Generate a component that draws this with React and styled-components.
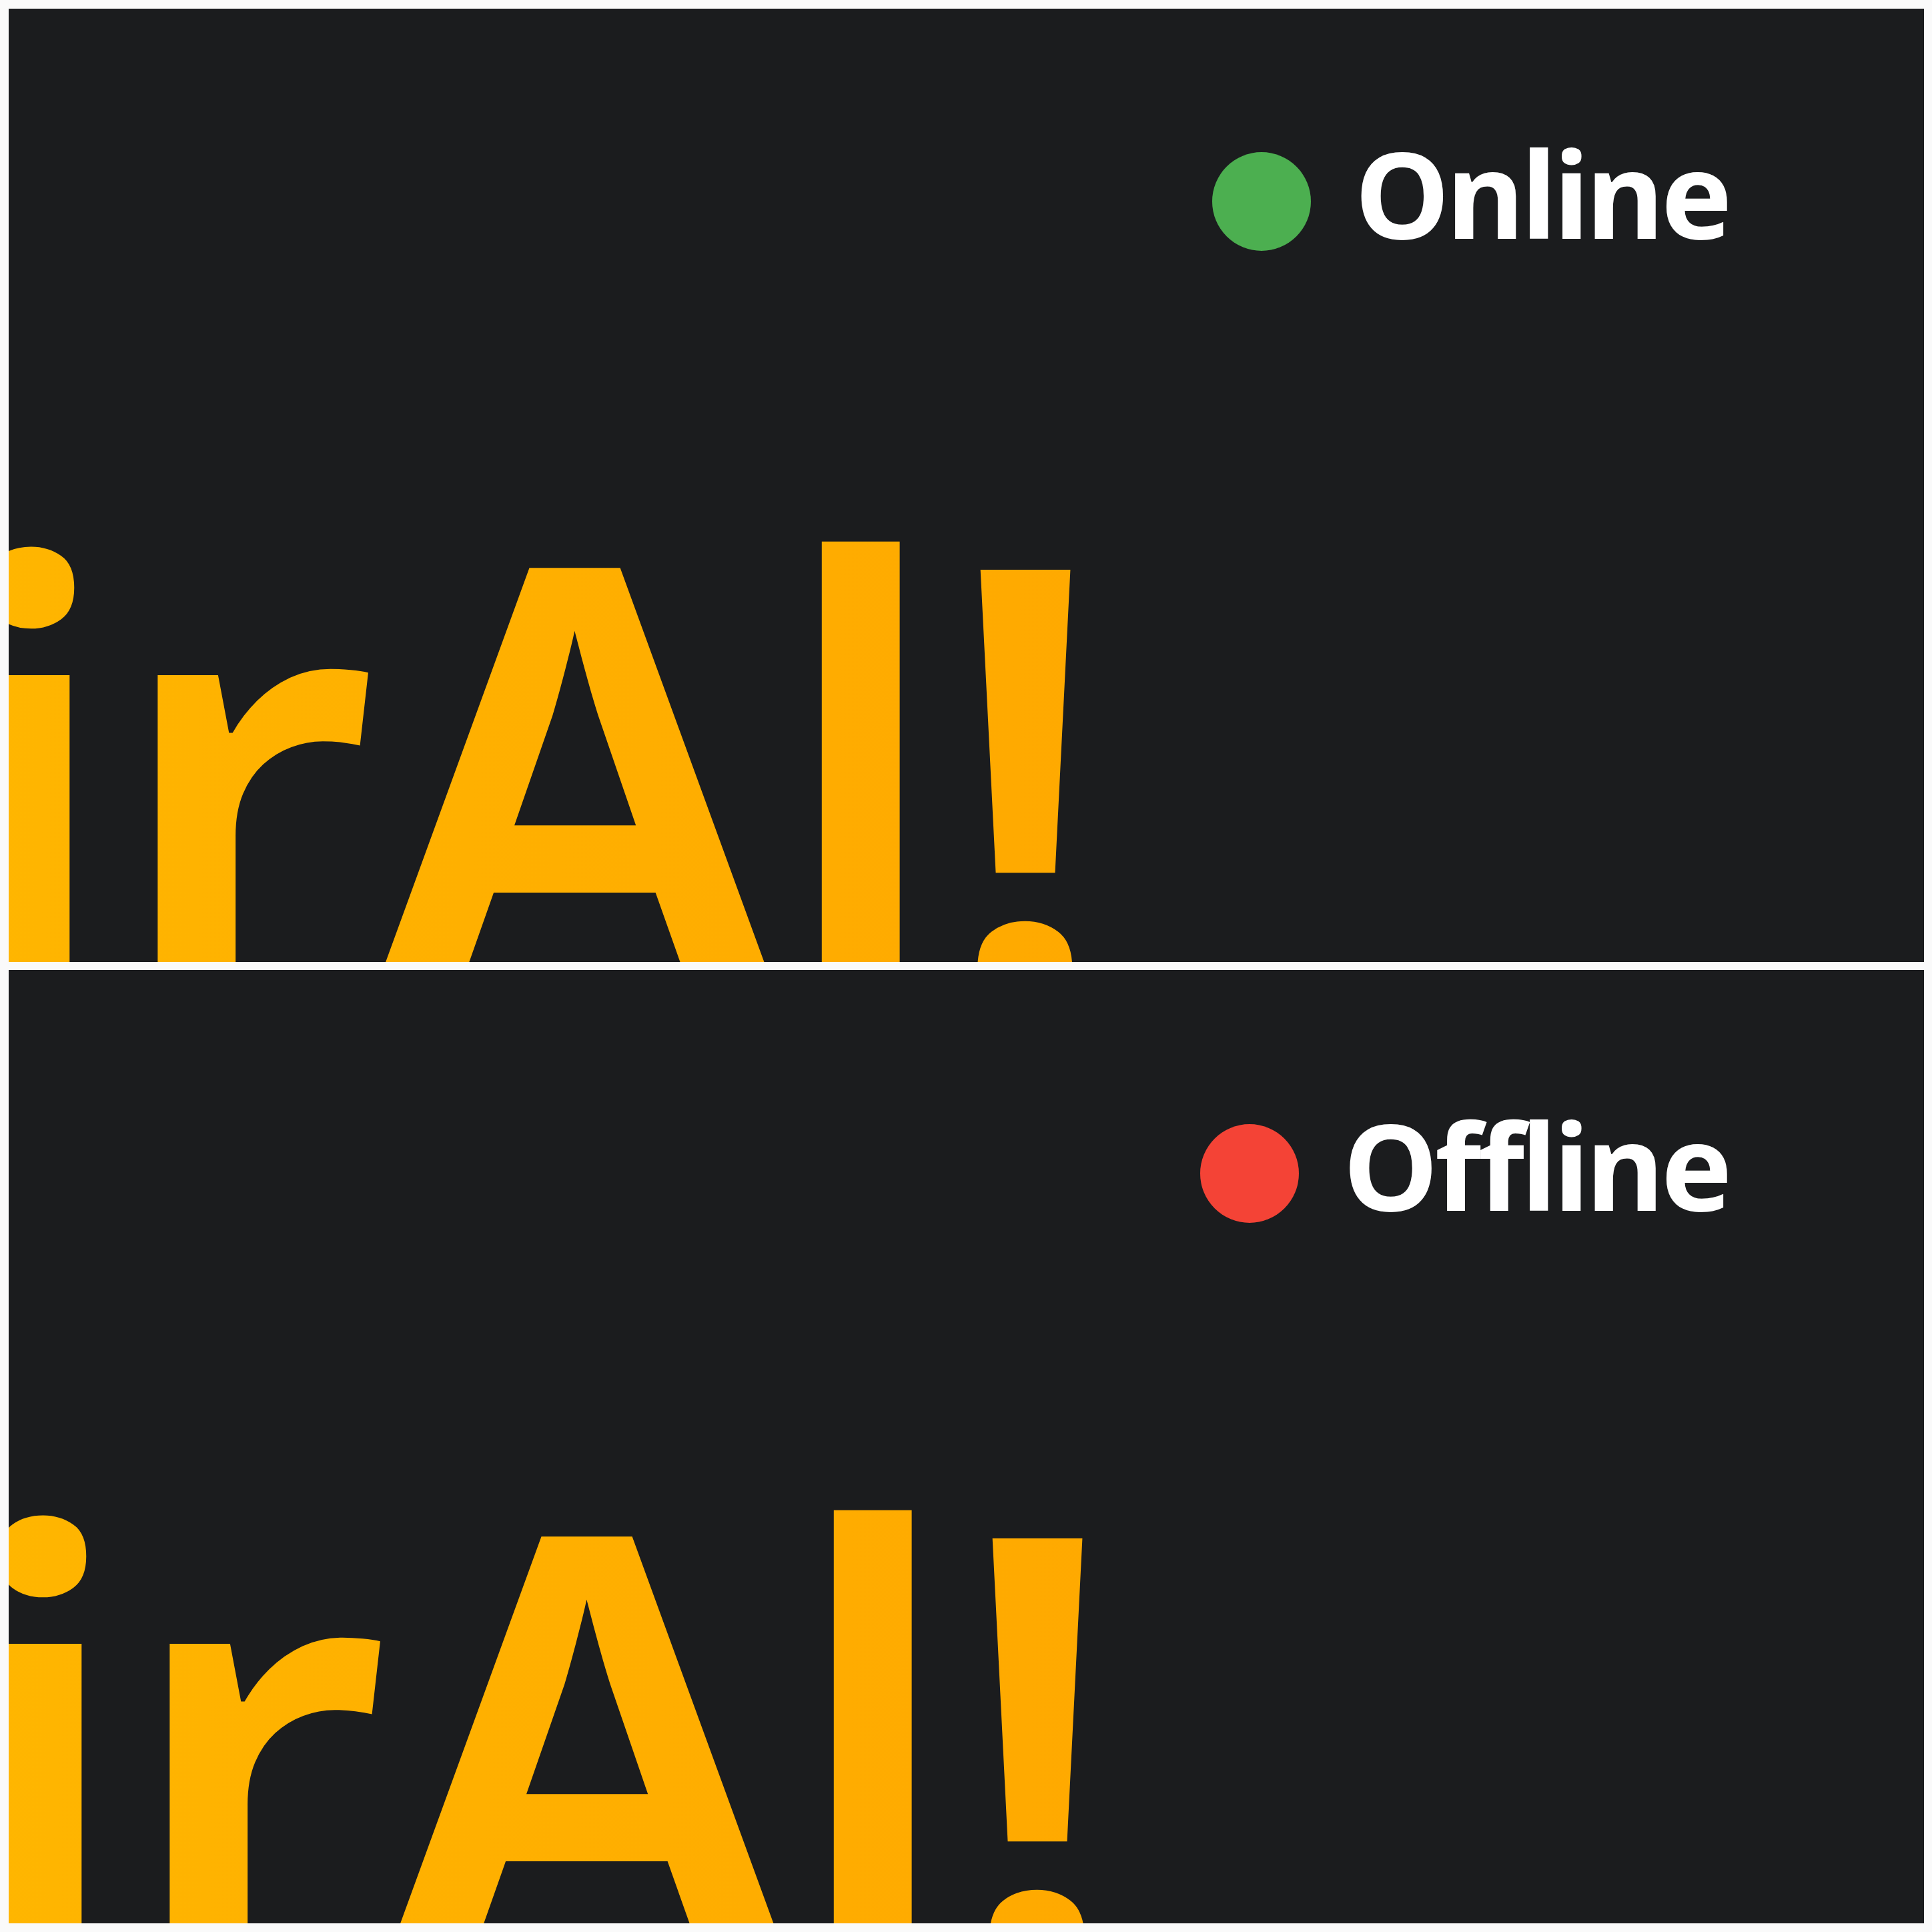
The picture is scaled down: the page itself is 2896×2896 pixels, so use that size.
import React from "react";
import styled, { createGlobalStyle } from "styled-components";

const GlobalStyle = createGlobalStyle`
  html, body {
    margin: 0;
    padding: 0;
    background: #fafafa;
  }
  body {
    font-family: "Noto Sans", "Open Sans", sans-serif;
  }
`;

const Page = styled.div`
  display: flex;
  flex-direction: column;
  gap: 12px;
  padding: 13px 12px 13px 13px;
  width: 2896px;
  height: 2896px;
  box-sizing: border-box;
`;

const Panel = styled.section`
  display: flex;
  flex-direction: column;
  height: 1429px;
  background: #1b1c1e;
  overflow: hidden;
`;

const StatusRow = styled.div`
  display: flex;
  justify-content: flex-end;
  align-items: center;
  gap: 66px;
  padding-top: ${({ $shift }) => 186 + $shift}px;
  padding-right: 292px;
`;

const Dot = styled.span`
  width: 148px;
  height: 148px;
  margin-top: 26px;
  border-radius: 50%;
  background: ${({ $online }) => ($online ? "#4caf50" : "#f44336")};
  flex-shrink: 0;
`;

const StatusLabel = styled.span`
  font-family: "Noto Sans", "Open Sans", sans-serif;
  font-weight: 700;
  font-size: 180px;
  line-height: 1;
  letter-spacing: -5px;
  color: #ffffff;
`;

const Title = styled.h1`
  display: inline-block;
  align-self: flex-start;
  margin: ${({ $dy }) => 316 + $dy}px 0 0 ${({ $dx }) => -1358 + $dx}px;
  font-family: "Noto Sans", "Open Sans", sans-serif;
  font-weight: 600;
  font-size: 920px;
  line-height: 1;
  letter-spacing: -0.012em;
  white-space: nowrap;
  background: linear-gradient(90deg, #ffc400 0%, #ffb400 50%, #ffa900 100%);
  -webkit-background-clip: text;
  background-clip: text;
  color: transparent;
`;

const StatusPanel = ({ online, shift, dx, dy }) => (
  <Panel>
    <StatusRow $shift={shift}>
      <Dot $online={online} />
      <StatusLabel>{online ? "Online" : "Offline"}</StatusLabel>
    </StatusRow>
    <Title $dx={dx} $dy={dy}>FlairAl!</Title>
  </Panel>
);

export default function App() {
  return (
    <>
      <GlobalStyle />
      <Page>
        <StatusPanel online shift={0} dx={0} dy={0} />
        <StatusPanel online={false} shift={16} dx={18} dy={-5} />
      </Page>
    </>
  );
}
